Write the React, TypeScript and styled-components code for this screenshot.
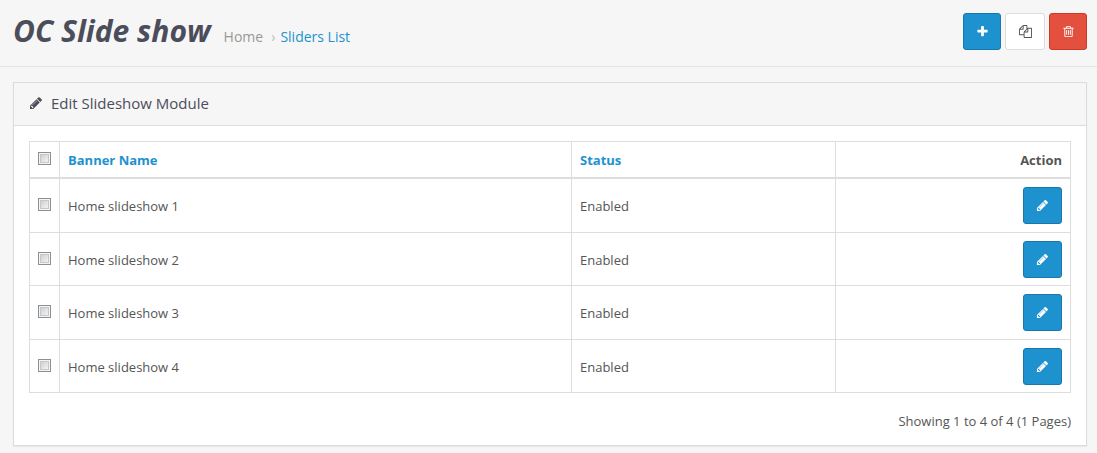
import React from 'react';
import styled, { createGlobalStyle, css } from 'styled-components';

const GlobalStyle = createGlobalStyle`
  *, *::before, *::after { box-sizing: border-box; }
  body {
    margin: 0;
    background: #f6f6f6;
    color: #555;
    font: 13px/20px "Open Sans", "Liberation Sans", sans-serif;
  }
`;

type Tone = 'primary' | 'plain' | 'danger';

const tones = {
  primary: css`background: #1e91cf; border-color: #1978ab; color: #fff;`,
  plain: css`background: #fff; border-color: #ddd; color: #555;`,
  danger: css`background: #e3503e; border-color: #cf3a28; color: #fff;`,
};

const PageHeader = styled.header`
  display: flex;
  align-items: flex-start;
  justify-content: space-between;
  padding: 13px 10px 16px 13px;
  border-bottom: 1px solid #e5e5e5;
`;

const Heading = styled.div`
  display: flex;
  align-items: baseline;
  gap: 13px;
`;

const Title = styled.h1`
  margin: 0;
  color: #4c4d5a;
  font-size: 30px;
  line-height: 36px;
  font-weight: 700;
  font-style: italic;
`;

const Crumbs = styled.nav`
  display: flex;
  gap: 8px;
  font-size: 14px;
  color: #bbb;
`;

const CrumbGroup = styled.span`
  display: flex;
  gap: 5px;
`;

const Crumb = styled.a<{ $current?: boolean }>`
  color: ${(p) => (p.$current ? '#1e91cf' : '#999')};
  text-decoration: none;
`;

const Actions = styled.div`
  display: flex;
  gap: 4px;
`;

const Button = styled.button<{ $tone: Tone; $width: number }>`
  display: inline-flex;
  align-items: center;
  justify-content: center;
  width: ${(p) => p.$width}px;
  height: 37px;
  padding: 0;
  border: 1px solid;
  border-radius: 3px;
  vertical-align: top;
  cursor: pointer;
  ${(p) => tones[p.$tone]}
`;

const Glyph = styled.svg<{ $size: number }>`
  display: block;
  width: ${(p) => p.$size}px;
  height: ${(p) => p.$size}px;
  fill: currentColor;
`;

const Panel = styled.section`
  margin: 15px 10px 7px 13px;
  background: #fff;
  border: 1px solid #dcdcdc;
  box-shadow: 0 1px 1px rgba(0, 0, 0, 0.05);
`;

const PanelHeading = styled.div`
  display: flex;
  align-items: center;
  gap: 8px;
  padding: 10px 15px 12px;
  background: #f6f6f6;
  border-bottom: 1px solid #dcdcdc;
  color: #4c4d5a;
`;

const PanelTitle = styled.h2`
  margin: 0;
  font-size: 15px;
  line-height: 20px;
  font-weight: 400;
`;

const PanelBody = styled.div`
  padding: 15px 15px 14px;
`;

const Table = styled.table`
  width: 100%;
  border-collapse: collapse;
  table-layout: fixed;
`;

const HeadCell = styled.th<{ $width?: string; $end?: boolean }>`
  width: ${(p) => p.$width ?? 'auto'};
  padding: 8px 8px 7px;
  border: 1px solid #ddd;
  border-bottom-width: 2px;
  text-align: ${(p) => (p.$end ? 'right' : 'left')};
  font-weight: 700;
`;

const Cell = styled.td<{ $end?: boolean }>`
  padding: 8px;
  border: 1px solid #ddd;
  text-align: ${(p) => (p.$end ? 'right' : 'left')};

  tr:nth-child(even) > & { padding-bottom: 7px; }
`;

const SortLink = styled.a`
  color: #1e91cf;
  text-decoration: none;
`;

const Checkbox = styled.input`
  appearance: none;
  display: block;
  width: 13px;
  height: 13px;
  margin: 0 0 3px;
  border: 1px solid #8e8f8f;
  background: linear-gradient(135deg, #c3c6cb, #f4f4f4 85%);
  box-shadow: inset 0 0 0 1px #f4f4f4, inset 0 0 0 2px #c4c7cb;

  &:checked { background: #1e91cf; }
`;

const Summary = styled.p`
  margin: 18px 0 0;
  text-align: right;
`;

const paths = {
  plus: 'M1600 736v192q0 40-28 68t-68 28h-416v416q0 40-28 68t-68 28h-192q-40 0-68-28t-28-68v-416h-416q-40 0-68-28t-28-68v-192q0-40 28-68t68-28h416v-416q0-40 28-68t68-28h192q40 0 68 28t28 68v416h416q40 0 68 28t28 68z',
  pencil: 'M491 1536l91-91-235-235-91 91v107h128v128h107zM1014 608q0-22-22-22-10 0-17 7l-542 542q-7 7-7 17 0 22 22 22 10 0 17-7l542-542q7-7 7-17zM960 416l416 416-832 832h-416v-416zM1643 512q0 53-37 90l-166 166-416-416 166-165q36-38 90-38 53 0 91 38l235 234q37 39 37 91z',
  copy: 'M1696 384q40 0 68 28t28 68v1216q0 40-28 68t-68 28h-960q-40 0-68-28t-28-68v-288h-544q-40 0-68-28t-28-68v-672q0-40 20-88t48-76l408-408q28-28 76-48t88-20h416q40 0 68 28t28 68v328q68-40 128-40h416zm-544 213l-299 299h299v-299zm-640-384l-299 299h299v-299zm196 647l316-316v-416h-384v416q0 40-28 68t-68 28h-416v640h512v-256q0-40 20-88t48-76zm956 804v-1152h-384v416q0 40-28 68t-68 28h-416v640h896z',
  trash: 'M704 736v576q0 14-9 23t-23 9h-64q-14 0-23-9t-9-23v-576q0-14 9-23t23-9h64q14 0 23 9t9 23zm256 0v576q0 14-9 23t-23 9h-64q-14 0-23-9t-9-23v-576q0-14 9-23t23-9h64q14 0 23 9t9 23zm256 0v576q0 14-9 23t-23 9h-64q-14 0-23-9t-9-23v-576q0-14 9-23t23-9h64q14 0 23 9t9 23zm128 724v-948h-896v948q0 22 7 40.5t14.5 27 10.5 8.5h832q3 0 10.5-8.5t14.5-27 7-40.5zm-672-1076h448l-48-117q-7-9-17-11h-317q-10 2-17 11zm928 32v64q0 14-9 23t-23 9h-96v948q0 83-47 143.5t-113 60.5h-832q-66 0-113-58.5t-47-141.5v-952h-96q-14 0-23-9t-9-23v-64q0-14 9-23t23-9h309l70-167q15-37 54-63t79-26h320q40 0 79 26t54 63l70 167h309q14 0 23 9t9 23z',
};

function Icon({ name, size = 13 }: { name: keyof typeof paths; size?: number }) {
  return (
    <Glyph $size={size} viewBox="0 0 1792 1792" aria-hidden="true">
      <path d={paths[name]} />
    </Glyph>
  );
}

const banners = ['Home slideshow 1', 'Home slideshow 2', 'Home slideshow 3', 'Home slideshow 4'];

export default function App() {
  return (
    <>
      <GlobalStyle />
      <PageHeader>
        <Heading>
          <Title>OC Slide show</Title>
          <Crumbs aria-label="Breadcrumb">
            <Crumb href="#home">Home</Crumb>
            <CrumbGroup>
              <span aria-hidden="true">›</span>
              <Crumb href="#sliders" $current>Sliders List</Crumb>
            </CrumbGroup>
          </Crumbs>
        </Heading>
        <Actions>
          <Button type="button" $tone="primary" $width={38} aria-label="Add"><Icon name="plus" /></Button>
          <Button type="button" $tone="plain" $width={40} aria-label="Copy"><Icon name="copy" /></Button>
          <Button type="button" $tone="danger" $width={38} aria-label="Delete"><Icon name="trash" /></Button>
        </Actions>
      </PageHeader>
      <Panel>
        <PanelHeading>
          <Icon name="pencil" size={14} />
          <PanelTitle>Edit Slideshow Module</PanelTitle>
        </PanelHeading>
        <PanelBody>
          <Table>
            <thead>
              <tr>
                <HeadCell $width="30px"><Checkbox type="checkbox" aria-label="Select all" /></HeadCell>
                <HeadCell><SortLink href="#name">Banner Name</SortLink></HeadCell>
                <HeadCell $width="264px"><SortLink href="#status">Status</SortLink></HeadCell>
                <HeadCell $width="235px" $end>Action</HeadCell>
              </tr>
            </thead>
            <tbody>
              {banners.map((name) => (
                <tr key={name}>
                  <Cell><Checkbox type="checkbox" aria-label={`Select ${name}`} /></Cell>
                  <Cell>{name}</Cell>
                  <Cell>Enabled</Cell>
                  <Cell $end>
                    <Button type="button" $tone="primary" $width={39} aria-label={`Edit ${name}`}><Icon name="pencil" /></Button>
                  </Cell>
                </tr>
              ))}
            </tbody>
          </Table>
          <Summary>Showing 1 to 4 of 4 (1 Pages)</Summary>
        </PanelBody>
      </Panel>
    </>
  );
}
